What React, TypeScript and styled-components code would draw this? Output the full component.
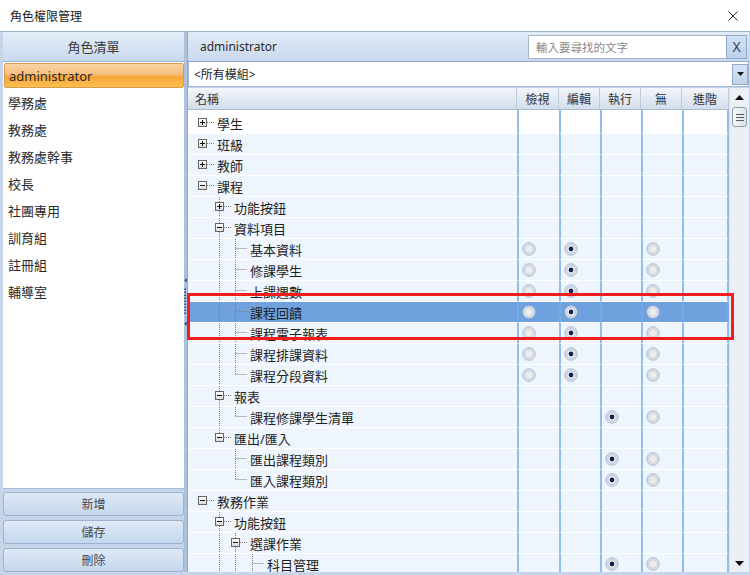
import React from 'react';
import styled, { createGlobalStyle } from 'styled-components';

const FONT = `"Noto Sans", "Noto Sans CJK TC", sans-serif`;

const Global = createGlobalStyle`
  html, body { margin: 0; padding: 0; }
  body { font-family: ${FONT}; background: #ffffff; }
  * { box-sizing: border-box; }
`;

const Window = styled.div`
  position: relative;
  width: 750px;
  height: 575px;
  display: flex;
  flex-direction: column;
  overflow: hidden;
  background: #ffffff;
`;

const TitleBar = styled.div`
  height: 32px;
  flex: none;
  display: flex;
  align-items: center;
  justify-content: space-between;
  padding: 0 12px 0 10px;
  font-size: 12px;
  color: #1a1a1a;
  border-bottom: 1px solid #9fb2cc;
`;

const Body = styled.div`
  flex: 1;
  min-height: 0;
  display: flex;
  background: #c6d5e9;
  padding: 0 1px 3px 3px;
`;

const LeftPanel = styled.div`
  width: 181px;
  flex: none;
  display: flex;
  flex-direction: column;
`;

const PanelHeader = styled.div`
  height: 30px;
  flex: none;
  display: flex;
  align-items: center;
  justify-content: center;
  font-size: 13px;
  color: #3a3a3a;
  background: linear-gradient(to bottom, #e4edf8, #c9daef);
  border-bottom: 1px solid #9db3d1;
`;

const RoleList = styled.div`
  flex: 1;
  background: #ffffff;
  padding-top: 1px;
  border-bottom: 1px solid #a9bcd5;
`;

const RoleItem = styled.div<{ $active?: boolean }>`
  height: ${p => (p.$active ? '25px' : '27px')};
  margin: ${p => (p.$active ? '0 0 1px 1px' : '0')};
  display: flex;
  align-items: center;
  padding-left: ${p => (p.$active ? '4px' : '5px')};
  font-size: 13px;
  color: #2a2a2a;
  border: ${p => (p.$active ? '1px solid #d79b4c' : 'none')};
  border-radius: 2px;
  background: ${p =>
    p.$active
      ? 'linear-gradient(to bottom, #f9d3a3 0%, #f6bf80 45%, #f7a637 55%, #fbc051 100%)'
      : 'transparent'};
`;

const ButtonStack = styled.div`
  flex: none;
  display: flex;
  flex-direction: column;
  gap: 4px;
  padding-top: 3px;
`;

const ActionButton = styled.div`
  height: 24px;
  display: flex;
  align-items: center;
  justify-content: center;
  font-size: 12px;
  color: #4a4a4a;
  border: 1px solid #9cb2d0;
  border-radius: 3px;
  background: linear-gradient(to bottom, #dfe9f6, #c4d7ef);
`;

const Splitter = styled.div`
  width: 4px;
  flex: none;
  display: flex;
  align-items: center;
  justify-content: center;
  background: #aec1db;
  border-right: 1px solid #93aacb;
`;

const RightPanel = styled.div`
  flex: 1;
  min-width: 0;
  display: flex;
  flex-direction: column;
`;

const RightHeader = styled.div`
  height: 30px;
  flex: none;
  display: flex;
  align-items: center;
  justify-content: space-between;
  padding: 0 2px 0 12px;
  font-size: 12px;
  color: #2a2a2a;
  background: linear-gradient(to bottom, #e2ebf7, #c9d9ee);
  border-bottom: 1px solid #8fa7c8;
`;

const SearchGroup = styled.div`
  display: flex;
  height: 24px;
`;

const SearchBox = styled.div`
  width: 198px;
  height: 100%;
  display: flex;
  align-items: center;
  padding-left: 7px;
  font-size: 11.5px;
  color: #8a8a8a;
  background: #ffffff;
  border: 1px solid #a8b6c8;
  border-right: none;
`;

const ClearButton = styled.div`
  width: 21px;
  height: 100%;
  display: flex;
  align-items: center;
  justify-content: center;
  font-size: 14px;
  color: #34465a;
  background: linear-gradient(to bottom, #d3e2f4, #bcd1eb);
  border: 1px solid #8fa7c8;
`;

const ComboRow = styled.div`
  height: 25px;
  flex: none;
  display: flex;
  align-items: center;
  justify-content: space-between;
  padding: 0 0 0 5px;
  font-size: 12px;
  color: #1e1e1e;
  background: #ffffff;
  border: 1px solid #a6b9d3;
  border-top: none;
  margin-bottom: 1px;
`;

const DropButton = styled.div`
  width: 16px;
  height: 21px;
  display: flex;
  align-items: center;
  justify-content: center;
  background: linear-gradient(to bottom, #d6e4f5, #bfd3ec);
  border: 1px solid #93aacb;
`;

const GridArea = styled.div`
  flex: 1;
  min-height: 0;
  display: flex;
  overflow: hidden;
  background: #ffffff;
`;

const Table = styled.div`
  width: 541px;
  flex: none;
  display: flex;
  flex-direction: column;
`;

const COLS = '329px 42px 41px 41px 41px 47px';

const HeaderRow = styled.div`
  height: 22px;
  flex: none;
  display: grid;
  grid-template-columns: ${COLS};
  background: linear-gradient(to bottom, #f3f6fb, #d3deec);
  border-bottom: 1px solid #aabbd2;
`;

const HeaderCell = styled.div<{ $left?: boolean }>`
  display: flex;
  align-items: center;
  justify-content: ${p => (p.$left ? 'flex-start' : 'center')};
  padding-left: ${p => (p.$left ? '7px' : '0')};
  font-size: 12px;
  color: #333333;
  border-right: 1px solid #bfccdc;
`;

const DataRow = styled.div<{ $first?: boolean }>`
  height: ${p => (p.$first ? '24px' : '21px')};
  flex: none;
  display: grid;
  grid-template-columns: ${COLS};
`;

const NameCell = styled.div<{ $bg: string }>`
  display: flex;
  align-items: flex-end;
  font-size: 13px;
  color: #1e1e1e;
  background: ${p => p.$bg};
  border-bottom: 1px solid #ffffff;
  white-space: nowrap;
`;

const NameInner = styled.div`
  height: 20px;
  display: flex;
  align-items: center;
`;

const PermCell = styled.div<{ $bg: string; $line: string; $last?: boolean }>`
  display: flex;
  align-items: flex-end;
  padding-left: 3px;
  background: ${p => p.$bg};
  border-left: 2px solid ${p => p.$line};
  border-right: ${p => (p.$last ? `2px solid ${p.$line}` : 'none')};
  border-bottom: 1px solid #ffffff;
`;

const RadioSlot = styled.div`
  height: 20px;
  display: flex;
  align-items: center;
`;

const ScrollBar = styled.div`
  width: 20px;
  flex: none;
  display: flex;
  flex-direction: column;
  align-items: center;
  background: #eceff3;
  border-left: 1px solid #dde3ea;
`;

const ScrollArrow = styled.div`
  height: 18px;
  width: 100%;
  flex: none;
  display: flex;
  align-items: center;
  justify-content: center;
`;

const Thumb = styled.div`
  width: 15px;
  height: 20px;
  flex: none;
  margin-top: 1px;
  display: flex;
  flex-direction: column;
  align-items: center;
  justify-content: center;
  gap: 2px;
  border: 1px solid #8e9db2;
  border-radius: 3px;
  background: linear-gradient(to right, #f6f7f9, #dce2ea);
`;

const Grip = styled.div`
  width: 8px;
  height: 1px;
  background: #5a5a5a;
`;

const Track = styled.div`
  flex: 1;
`;

const Highlight = styled.div`
  position: absolute;
  left: 187px;
  top: 293px;
  width: 547px;
  height: 47px;
  border: 3px solid #f41c1c;
  pointer-events: none;
`;

type Perm = 'edit' | 'exec' | undefined;
type Kind = 'plus' | 'minus' | 'leaf';

interface TreeNode {
  label: string;
  kind: Kind;
  perm?: Perm;
  children?: TreeNode[];
  selected?: boolean;
  more?: boolean;
}

interface FlatRow {
  label: string;
  level: number;
  kind: Kind;
  hasNext: boolean;
  guides: boolean[];
  perm?: Perm;
  selected?: boolean;
}

const leaf = (label: string, perm: Perm, extra: Partial<TreeNode> = {}): TreeNode => ({
  label,
  kind: 'leaf',
  perm,
  ...extra,
});

const tree: TreeNode[] = [
  { label: '學生', kind: 'plus' },
  { label: '班級', kind: 'plus' },
  { label: '教師', kind: 'plus' },
  {
    label: '課程',
    kind: 'minus',
    children: [
      { label: '功能按鈕', kind: 'plus' },
      {
        label: '資料項目',
        kind: 'minus',
        children: [
          leaf('基本資料', 'edit'),
          leaf('修課學生', 'edit'),
          leaf('上課週數', 'edit'),
          leaf('課程回饋', 'edit', { selected: true }),
          leaf('課程電子報表', 'edit'),
          leaf('課程排課資料', 'edit'),
          leaf('課程分段資料', 'edit'),
        ],
      },
      { label: '報表', kind: 'minus', children: [leaf('課程修課學生清單', 'exec')] },
      {
        label: '匯出/匯入',
        kind: 'minus',
        children: [leaf('匯出課程類別', 'exec'), leaf('匯入課程類別', 'exec')],
      },
    ],
  },
  {
    label: '教務作業',
    kind: 'minus',
    more: true,
    children: [
      {
        label: '功能按鈕',
        kind: 'minus',
        more: true,
        children: [
          {
            label: '選課作業',
            kind: 'minus',
            more: true,
            children: [leaf('科目管理', 'exec', { more: true })],
          },
        ],
      },
    ],
  },
];

function flatten(nodes: TreeNode[], level: number, guides: boolean[], out: FlatRow[]) {
  nodes.forEach((n, i) => {
    const hasNext = i < nodes.length - 1 || !!n.more;
    out.push({
      label: n.label,
      level,
      kind: n.kind,
      hasNext,
      guides,
      perm: n.perm,
      selected: n.selected,
    });
    if (n.children && n.kind === 'minus') flatten(n.children, level + 1, [...guides, hasNext], out);
  });
}

const rows: FlatRow[] = [];
flatten(tree, 0, [], rows);

const lineX = (l: number) => Math.round(14 + 16.5 * l) + 0.5;
const textX = (l: number) => Math.round(29 + 16.5 * l);

const DOT = { stroke: '#7f7f7f', strokeWidth: 1, strokeDasharray: '1 1' } as const;

function TreeGlyph({ row }: { row: FlatRow }) {
  const L = row.level;
  const c = lineX(L);
  const tx = textX(L);
  const H = 20;
  const mid = 9.5;
  const parts: React.ReactNode[] = [];
  for (let a = 1; a < L; a++) {
    if (row.guides[a]) parts.push(<line key={'g' + a} x1={lineX(a)} y1={0} x2={lineX(a)} y2={H} {...DOT} />);
  }
  if (row.kind === 'leaf') {
    if (L >= 1) parts.push(<line key="v" x1={c} y1={0} x2={c} y2={row.hasNext ? H : mid} {...DOT} />);
    parts.push(<line key="h" x1={c} y1={mid} x2={tx - 3} y2={mid} {...DOT} />);
  } else {
    if (L >= 1) {
      parts.push(<line key="vt" x1={c} y1={0} x2={c} y2={5} {...DOT} />);
      if (row.hasNext) parts.push(<line key="vb" x1={c} y1={14} x2={c} y2={H} {...DOT} />);
    }
    parts.push(<line key="h" x1={c + 4.5} y1={mid} x2={tx - 3} y2={mid} {...DOT} />);
    parts.push(
      <rect key="box" x={c - 4} y={mid - 4} width={8} height={8} fill="url(#boxfill)" stroke="#666666" strokeWidth={1} />
    );
    parts.push(<line key="m" x1={c - 2.5} y1={mid} x2={c + 2.5} y2={mid} stroke="#111" strokeWidth={1} />);
    if (row.kind === 'plus')
      parts.push(<line key="p" x1={c} y1={mid - 2.5} x2={c} y2={mid + 2.5} stroke="#111" strokeWidth={1} />);
  }
  return (
    <svg width={tx} height={H} style={{ display: 'block', flex: 'none' }}>
      <defs>
        <linearGradient id="boxfill" x1="0" y1="0" x2="0" y2="1">
          <stop offset="0" stopColor="#ffffff" />
          <stop offset="1" stopColor="#d8d8d8" />
        </linearGradient>
      </defs>
      {parts}
    </svg>
  );
}

function Radio({ on }: { on: boolean }) {
  return (
    <svg width={14} height={14} viewBox="0 0 14 14" style={{ display: 'block' }}>
      <circle cx={7} cy={7} r={6.2} fill="#e3e9f2" stroke="#a5b6cf" strokeWidth={1} />
      {on ? (
        <>
          <circle cx={7} cy={7} r={4.2} fill="#ffffff" stroke="#9aa8bd" strokeWidth={0.8} />
          <circle cx={7} cy={7} r={2.4} fill="#13224f" />
        </>
      ) : (
        <circle cx={7} cy={7} r={4.2} fill="#ececec" stroke="#c3c3c3" strokeWidth={0.8} />
      )}
    </svg>
  );
}

const permCells = (perm: Perm): (boolean | null)[] => {
  if (perm === 'edit') return [false, true, null, false, null];
  if (perm === 'exec') return [null, null, true, false, null];
  return [null, null, null, null, null];
};

const roles = ['學務處', '教務處', '教務處幹事', '校長', '社團專用', '訓育組', '註冊組', '輔導室'];
const headers = ['檢視', '編輯', '執行', '無', '進階'];

function SplitGrip() {
  return (
    <svg width={4} height={66} viewBox="0 0 4 66" style={{ display: 'block' }}>
      <polygon points="3.5,1 0.5,4 3.5,7" fill="#1f3b73" />
      {[0, 1, 2, 3, 4, 5, 6, 7, 8].map(i => (
        <rect key={i} x={0.5} y={15 + i * 4} width={2} height={2} fill="#1f3b73" />
      ))}
      <polygon points="3.5,59 0.5,62 3.5,65" fill="#1f3b73" />
    </svg>
  );
}

export default function App() {
  return (
    <Window>
      <Global />
      <TitleBar>
        <span>角色權限管理</span>
        <svg width={10} height={10} viewBox="0 0 10 10">
          <path d="M0.5 0.5 L9.5 9.5 M9.5 0.5 L0.5 9.5" stroke="#2a2a2a" strokeWidth={1} />
        </svg>
      </TitleBar>
      <Body>
        <LeftPanel>
          <PanelHeader>角色清單</PanelHeader>
          <RoleList>
            <RoleItem $active>administrator</RoleItem>
            {roles.map(r => (
              <RoleItem key={r}>{r}</RoleItem>
            ))}
          </RoleList>
          <ButtonStack>
            <ActionButton>新增</ActionButton>
            <ActionButton>儲存</ActionButton>
            <ActionButton>刪除</ActionButton>
          </ButtonStack>
        </LeftPanel>
        <Splitter>
          <SplitGrip />
        </Splitter>
        <RightPanel>
          <RightHeader>
            <span>administrator</span>
            <SearchGroup>
              <SearchBox>輸入要尋找的文字</SearchBox>
              <ClearButton>X</ClearButton>
            </SearchGroup>
          </RightHeader>
          <ComboRow>
            <span>&lt;所有模組&gt;</span>
            <DropButton>
              <svg width={7} height={4} viewBox="0 0 7 4">
                <polygon points="0,0 7,0 3.5,4" fill="#1a1a1a" />
              </svg>
            </DropButton>
          </ComboRow>
          <GridArea>
            <Table>
              <HeaderRow>
                <HeaderCell $left>名稱</HeaderCell>
                {headers.map(h => (
                  <HeaderCell key={h}>{h}</HeaderCell>
                ))}
              </HeaderRow>
              {rows.map((row, idx) => {
                const first = idx === 0;
                const bg = row.selected ? '#6ea1dd' : first ? '#ffffff' : '#eef5fd';
                const line = row.selected ? '#77a8e0' : '#8fbdee';
                return (
                  <DataRow key={idx} $first={first}>
                    <NameCell $bg={bg}>
                      <NameInner>
                        <TreeGlyph row={row} />
                        <span>{row.label}</span>
                      </NameInner>
                    </NameCell>
                    {permCells(row.perm).map((v, i) => (
                      <PermCell key={i} $bg={bg} $line={line} $last={i === 4}>
                        <RadioSlot>{v !== null && <Radio on={v} />}</RadioSlot>
                      </PermCell>
                    ))}
                  </DataRow>
                );
              })}
            </Table>
            <ScrollBar>
              <ScrollArrow>
                <svg width={9} height={5} viewBox="0 0 9 5">
                  <polygon points="0,5 9,5 4.5,0" fill="#111" />
                </svg>
              </ScrollArrow>
              <Thumb>
                <Grip />
                <Grip />
                <Grip />
              </Thumb>
              <Track />
              <ScrollArrow>
                <svg width={9} height={5} viewBox="0 0 9 5">
                  <polygon points="0,0 9,0 4.5,5" fill="#111" />
                </svg>
              </ScrollArrow>
            </ScrollBar>
          </GridArea>
        </RightPanel>
      </Body>
      <Highlight />
    </Window>
  );
}
